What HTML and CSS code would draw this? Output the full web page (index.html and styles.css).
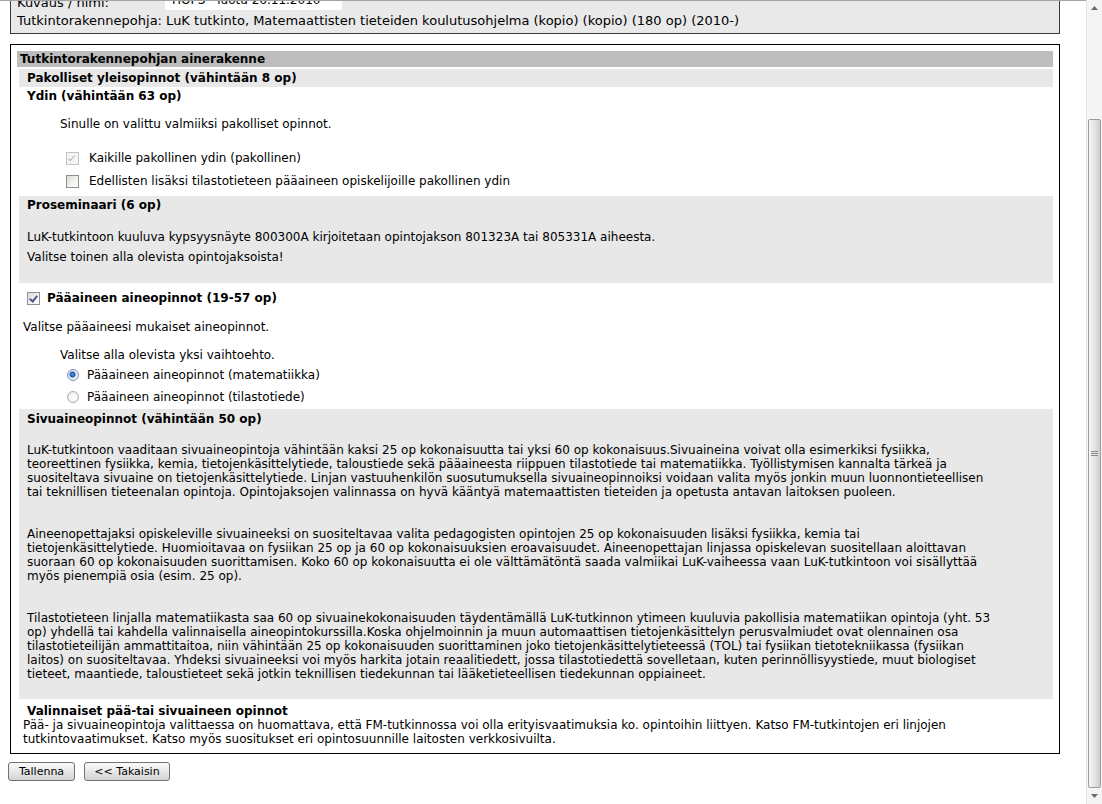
FILE: index.html
```html
<!DOCTYPE html>
<html lang="fi">
  <head>
    <meta charset="UTF-8" />
    <title>HOPS</title>
    <link rel="stylesheet" href="styles.css">
  </head>
  <body>
    <div class="window">
      <div class="viewport">
        <div class="content">
          <!-- perustiedot -->
          <div class="info-box">
            <div class="info-row">
              <label class="info-label" for="hopsName">Kuvaus / nimi:</label>
              <input class="name-input" id="hopsName" type="text" value="HOPS - luotu 26.11.2010" />
            </div>
            <div class="info-line">Tutkintorakennepohja: LuK tutkinto, Matemaattisten tieteiden koulutusohjelma (kopio) (kopio) (180 op) (2010-)</div>
          </div>

          <!-- ainerakenne -->
          <div class="structure">
            <div class="structure-title">Tutkintorakennepohjan ainerakenne</div>
            <div class="group">
              <div class="group-title shaded">Pakolliset yleisopinnot (vähintään 8 op)</div>
              <div class="group-title">Ydin (vähintään 63 op)</div>
              <p class="note">Sinulle on valittu valmiiksi pakolliset opinnot.</p>
              <label class="choice first"><input type="checkbox" checked disabled /> Kaikille pakollinen ydin (pakollinen)</label>
              <label class="choice"><input type="checkbox" /> Edellisten lisäksi tilastotieteen pääaineen opiskelijoille pakollinen ydin</label>

              <div class="section seminar">
                <div class="section-title">Proseminaari (6 op)</div>
                <div class="seminar-text">
                  <p>LuK-tutkintoon kuuluva kypsyysnäyte 800300A kirjoitetaan opintojakson 801323A tai 805331A aiheesta.</p>
                  <p>Valitse toinen alla olevista opintojaksoista!</p>
                </div>
              </div>

              <label class="major"><input type="checkbox" checked /> Pääaineen aineopinnot (19-57 op)</label>
              <p class="plain">Valitse pääaineesi mukaiset aineopinnot.</p>
              <p class="note tight">Valitse alla olevista yksi vaihtoehto.</p>
              <label class="option first"><input type="radio" name="major" checked /> Pääaineen aineopinnot (matematiikka)</label>
              <label class="option"><input type="radio" name="major" /> Pääaineen aineopinnot (tilastotiede)</label>

              <div class="section minor">
                <div class="section-title">Sivuaineopinnot (vähintään 50 op)</div>
                <p class="long-text">LuK-tutkintoon vaaditaan sivuaineopintoja vähintään kaksi 25 op kokonaisuutta tai yksi 60 op kokonaisuus.Sivuaineina voivat olla esimerkiksi fysiikka,<br>teoreettinen fysiikka, kemia, tietojenkäsittelytiede, taloustiede sekä pääaineesta riippuen tilastotiede tai matematiikka. Työllistymisen kannalta tärkeä ja<br>suositeltava sivuaine on tietojenkäsittelytiede. Linjan vastuuhenkilön suosutumuksella sivuaineopinnoiksi voidaan valita myös jonkin muun luonnontieteellisen<br>tai teknillisen tieteenalan opintoja. Opintojaksojen valinnassa on hyvä kääntyä matemaattisten tieteiden ja opetusta antavan laitoksen puoleen.</p>
                <p class="long-text">Aineenopettajaksi opiskeleville sivuaineeksi on suositeltavaa valita pedagogisten opintojen 25 op kokonaisuuden lisäksi fysiikka, kemia tai<br>tietojenkäsittelytiede. Huomioitavaa on fysiikan 25 op ja 60 op kokonaisuuksien eroavaisuudet. Aineenopettajan linjassa opiskelevan suositellaan aloittavan<br>suoraan 60 op kokonaisuuden suorittamisen. Koko 60 op kokonaisuutta ei ole välttämätöntä saada valmiikai LuK-vaiheessa vaan LuK-tutkintoon voi sisällyttää<br>myös pienempiä osia (esim. 25 op).</p>
                <p class="long-text">Tilastotieteen linjalla matematiikasta saa 60 op sivuainekokonaisuuden täydentämällä LuK-tutkinnon ytimeen kuuluvia pakollisia matematiikan opintoja (yht. 53<br>op) yhdellä tai kahdella valinnaisella aineopintokurssilla.Koska ohjelmoinnin ja muun automaattisen tietojenkäsittelyn perusvalmiudet ovat olennainen osa<br>tilastotieteilijän ammattitaitoa, niin vähintään 25 op kokonaisuuden suorittaminen joko tietojenkäsittelytieteessä (TOL) tai fysiikan tietotekniikassa (fysiikan<br>laitos) on suositeltavaa. Yhdeksi sivuaineeksi voi myös harkita jotain reaalitiedett, jossa tilastotiedettä sovelletaan, kuten perinnöllisyystiede, muut biologiset<br>tieteet, maantiede, taloustieteet sekä jotkin teknillisen tiedekunnan tai lääketieteellisen tiedekunnan oppiaineet.</p>
              </div>

              <div class="optional-title">Valinnaiset pää-tai sivuaineen opinnot</div>
              <p class="optional-text">Pää- ja sivuaineopintoja valittaessa on huomattava, että FM-tutkinnossa voi olla erityisvaatimuksia ko. opintoihin liittyen. Katso FM-tutkintojen eri linjojen<br>tutkintovaatimukset. Katso myös suositukset eri opintosuunnille laitosten verkkosivuilta.</p>
            </div>
          </div>

          <div class="actions">
            <button type="button" class="save">Tallenna</button>
            <button type="button" class="back">&lt;&lt; Takaisin</button>
          </div>
        </div>
      </div>

      <!-- vierityspalkki -->
      <div class="scrollbar">
        <div class="scroll-btn up"><svg width="7" height="4" viewBox="0 0 7 4"><path d="M0 4 L3.5 0 L7 4 Z" fill="#6b6b6b"/></svg></div>
        <div class="scroll-track"></div>
        <div class="scroll-thumb">
          <svg width="7" height="6" viewBox="0 0 7 6"><path d="M0 0.5H7M0 2.5H7M0 4.5H7" stroke="#8a8a8a" stroke-width="1"/></svg>
        </div>
        <div class="scroll-btn down"><svg width="7" height="4" viewBox="0 0 7 4"><path d="M0 0 L3.5 4 L7 0 Z" fill="#6b6b6b"/></svg></div>
      </div>
    </div>
  </body>
</html>
```

FILE: styles.css
```css
body {
  margin: 0;
  font-family: Verdana, "DejaVu Sans", sans-serif;
  font-size: 12px;
  color: #000;
  background: #fff;
  overflow: hidden;
}
p {
  margin: 0;
}
.window {
  display: flex;
  height: 804px;
}
.viewport {
  flex: 1;
  height: 804px;
  box-sizing: border-box;
  border-top: 1px solid #a3a3a3;
  overflow: hidden;
}
.content {
  margin-top: -15px;
  padding-left: 8px;
}

/* perustiedot */
.info-box {
  box-sizing: border-box;
  width: 1050px;
  margin-left: 2px;
  padding: 2px 6px 3px 6px;
  border: 1px solid #3a3a3a;
  background: #e9e9e9;
  font-size: 13px;
}
.info-row {
  display: flex;
  align-items: flex-end;
  height: 22px;
}
.info-label {
  width: 148px;
  line-height: 16px;
}
.name-input {
  box-sizing: border-box;
  width: 177px;
  height: 20px;
  margin-bottom: 1px;
  padding: 0 7px;
  border: none;
  background: #fff;
  font-family: inherit;
  font-size: 12px;
}
.info-line {
  margin-top: 1px;
  line-height: 18px;
}

/* ainerakenne */
.structure {
  box-sizing: border-box;
  width: 1050px;
  margin: 10px 0 0 2px;
  padding: 6px 6px 7px 6px;
  border: 1px solid #000;
}
.structure-title {
  height: 16px;
  line-height: 16px;
  padding-left: 3px;
  background: #bdbdbd;
  font-weight: bold;
}
.group {
  margin-left: 2px;
}
.group-title {
  height: 18px;
  line-height: 18px;
  padding-left: 8px;
  font-weight: bold;
}
.group-title.shaded {
  margin-top: 2px;
  background: #e8e8e8;
}
.note {
  margin-top: 10px;
  padding-left: 41px;
  line-height: 18px;
}
.choice,
.option,
.major {
  display: flex;
  align-items: center;
  height: 18px;
  line-height: 18px;
}
.choice {
  margin-top: 5px;
  padding-left: 47px;
}
.choice.first {
  margin-top: 16px;
}
.choice input {
  margin: 0 10px 0 0;
}

/* ruksit ja radionapit */
input[type="checkbox"] {
  appearance: none;
  position: relative;
  width: 13px;
  height: 13px;
  border: 1px solid #8e8f8f;
  box-sizing: border-box;
  background: linear-gradient(135deg, #dcdcd7 0%, #f3f3f1 60%, #fff 100%);
}
input[type="checkbox"]:disabled {
  border-color: #c3c3c3;
  background: #f4f4f4;
}
input[type="checkbox"]:checked::after {
  content: "";
  position: absolute;
  left: 3px;
  top: 1px;
  width: 3px;
  height: 6px;
  border-right: 2px solid #4b5b8c;
  border-bottom: 2px solid #4b5b8c;
  transform: rotate(40deg);
}
input[type="checkbox"]:disabled:checked::after {
  border-color: #b5b5b5;
  width: 2px;
  border-width: 1px;
}
input[type="radio"] {
  appearance: none;
  width: 12px;
  height: 12px;
  margin: 0 8px 0 0;
  border: 1px solid #a5adb5;
  border-radius: 50%;
  box-sizing: border-box;
  background: radial-gradient(circle at 60% 60%, #fff 0, #e6e6e3 100%);
}
input[type="radio"]:checked {
  border-color: #7e93b0;
  background: radial-gradient(circle at 45% 45%, #5d9be8 0, #1c55b5 2.5px, #dfe6ef 3.5px, #fff 100%);
}

/* osiot */
.section {
  background: #e8e8e8;
  padding-left: 8px;
}
.section-title {
  height: 18px;
  line-height: 18px;
  font-weight: bold;
}
.seminar {
  margin-top: 6px;
  padding-bottom: 16px;
}
.seminar-text {
  margin-top: 13px;
  line-height: 20px;
}
.major {
  margin-top: 6px;
  padding-left: 8px;
  font-weight: bold;
}
.major input {
  margin: 0 7px 0 0;
}
.plain {
  margin-top: 11px;
  padding-left: 4px;
  line-height: 18px;
}
.option {
  margin-top: 4px;
  padding-left: 48px;
}
.option.first {
  margin-top: 2px;
}
.minor {
  margin-top: 3px;
  padding-top: 1px;
  padding-bottom: 18px;
}
.long-text {
  margin-top: 28px;
  line-height: 14px;
  white-space: nowrap;
}
.minor .section-title + .long-text {
  margin-top: 15px;
}
.optional-title {
  margin-top: 5px;
  padding-left: 8px;
  line-height: 14px;
  font-weight: bold;
}
.optional-text {
  padding-left: 4px;
  line-height: 14px;
  white-space: nowrap;
}

/* painikkeet */
.actions {
  display: flex;
  gap: 9px;
  margin-top: 8px;
}
.actions button {
  box-sizing: border-box;
  height: 19px;
  padding: 0;
  border: 1px solid #707070;
  border-radius: 3px;
  background: linear-gradient(#fbfbfb, #e3e3e3 60%, #d4d4d4);
  font-family: inherit;
  font-size: 11px;
  color: #000;
}
.actions .save {
  width: 67px;
}
.actions .back {
  width: 86px;
}

/* vierityspalkki */
.scrollbar {
  display: flex;
  flex-direction: column;
  width: 15px;
  height: 804px;
  background: #f4f4f4;
  border-left: 1px solid #e6e6e6;
}
.scroll-btn {
  display: flex;
  align-items: center;
  justify-content: center;
  height: 16px;
}
.scroll-track {
  height: 103px;
}
.scroll-thumb {
  flex: 1;
  display: flex;
  align-items: center;
  justify-content: center;
  margin: 0 1px;
  border: 1px solid #9c9c9c;
  border-radius: 2px;
  background: linear-gradient(to right, #f6f6f6, #e4e4e4 50%, #cfcfcf);
}
```
